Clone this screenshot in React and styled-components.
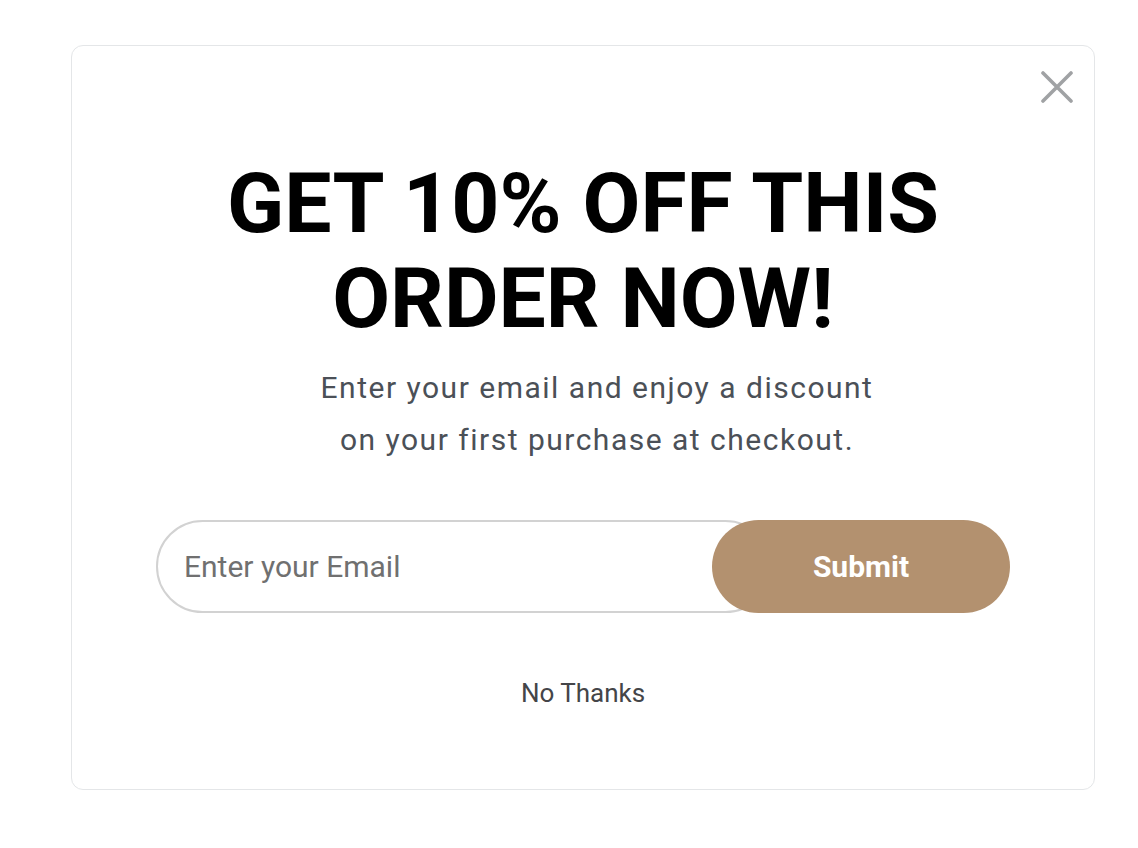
import React from "react";
import styled, { createGlobalStyle } from "styled-components";

const Global = createGlobalStyle`
  html, body { margin: 0; padding: 0; background: #ffffff; }
  body { font-family: Roboto, "Liberation Sans", sans-serif; }
  * { box-sizing: border-box; }
`;

const Page = styled.div`
  padding: 45px 43px 0 71px;
`;

const Card = styled.div`
  width: 1024px;
  height: 745px;
  border: 1px solid #e4e6e8;
  border-radius: 12px;
  background: #fff;
  position: relative;
  display: flex;
  flex-direction: column;
  align-items: center;
  padding: 110px 84px 0;
`;

const Close = styled.button`
  position: absolute;
  top: 25px;
  right: 21px;
  width: 32px;
  height: 32px;
  padding: 0;
  border: 0;
  background: transparent;
  cursor: pointer;
  display: flex;
  align-items: center;
  justify-content: center;
`;

const Title = styled.h1`
  margin: 0;
  font-family: Roboto, "Liberation Sans", sans-serif;
  font-weight: 700;
  font-size: 84px;
  line-height: 95px;
  color: #000;
  text-align: center;
  letter-spacing: 0;
`;

const Subtitle = styled.p`
  margin: 16px 0 0;
  padding-left: 28px;
  font-size: 30px;
  line-height: 52px;
  letter-spacing: 1.5px;
  color: #4b5057;
  text-align: center;
  font-weight: 400;
`;

const Form = styled.form`
  margin-top: 54px;
  width: 854px;
  display: flex;
  align-items: stretch;
  height: 93px;
`;

const Input = styled.input`
  flex: 1;
  min-width: 0;
  height: 100%;
  border: 2px solid #d2d2d2;
  border-radius: 47px;
  padding: 0 0 0 26px;
  font-family: Roboto, "Liberation Sans", sans-serif;
  font-size: 30px;
  color: #333;
  outline: none;
  &::placeholder { color: #707070; }
`;

const Submit = styled.button`
  width: 298px;
  margin-left: -60px;
  height: 100%;
  border: 0;
  border-radius: 47px;
  background: #b3916f;
  color: #fff;
  font-family: Roboto, "Liberation Sans", sans-serif;
  font-weight: 700;
  font-size: 30px;
  cursor: pointer;
  position: relative;
`;

const NoThanks = styled.button`
  margin-top: 65px;
  border: 0;
  background: transparent;
  font-family: Roboto, "Liberation Sans", sans-serif;
  font-size: 26px;
  color: #444548;
  cursor: pointer;
  padding: 0;
`;

export default function App() {
  return (
    <Page>
      <Global />
      <Card>
        <Close aria-label="Close">
          <svg width="32" height="32" viewBox="0 0 32 32">
            <path d="M2 2 L30 30 M30 2 L2 30" stroke="#a0a2a4" strokeWidth="3.6" strokeLinecap="round" />
          </svg>
        </Close>
        <Title>
          GET 10% OFF THIS
          <br />
          ORDER NOW!
        </Title>
        <Subtitle>
          Enter your email and enjoy a discount
          <br />
          on your first purchase at checkout.
        </Subtitle>
        <Form onSubmit={(e) => e.preventDefault()}>
          <Input type="email" placeholder="Enter your Email" />
          <Submit type="submit">Submit</Submit>
        </Form>
        <NoThanks type="button">No Thanks</NoThanks>
      </Card>
    </Page>
  );
}
